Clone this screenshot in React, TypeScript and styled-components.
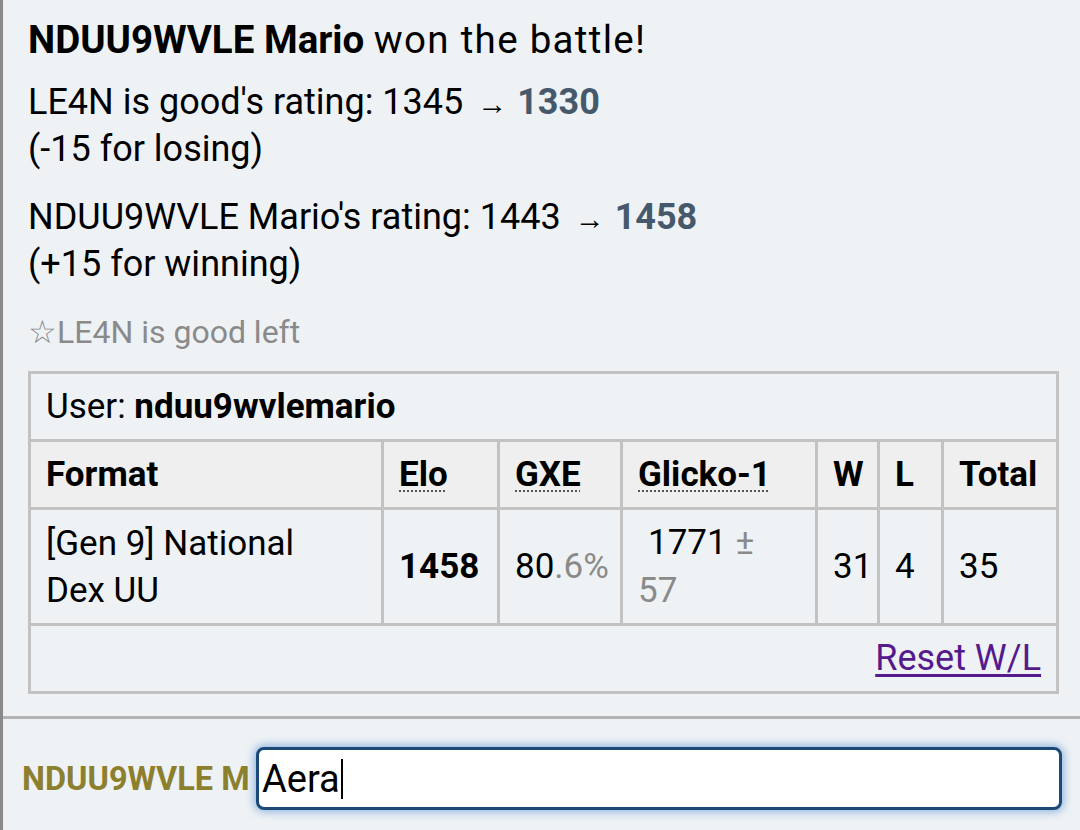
import React from "react";
import styled, { createGlobalStyle } from "styled-components";

const Global = createGlobalStyle`
  html, body {
    margin: 0;
    padding: 0;
    background: #eef2f5;
  }
  body {
    font-family: Roboto, "Liberation Sans", sans-serif;
    color: #000;
  }
`;

const Page = styled.div`
  width: 1080px;
  height: 830px;
  box-sizing: border-box;
  border-left: 3px solid #8a8a8a;
  background: #eef2f5;
  overflow: hidden;
`;

const Log = styled.section`
  padding: 16px 24px 22px 25px;
  border-bottom: 3px solid #b4b4b4;
  font-size: 36px;
  line-height: 47px;
`;

const Line = styled.p<{ gap?: number }>`
  margin: 0 0 ${(p) => p.gap ?? 13}px;
`;

const Headline = styled.p`
  margin: 0 0 16px;
  font-size: 38.5px;
`;

const Plain = styled.span`
  letter-spacing: 1.3px;
`;

const NewRating = styled.strong`
  color: #46596c;
`;

const Arrow = styled.span`
  font-size: 30px;
  line-height: 1;
  padding: 0 10px 0 14px;
`;

const Muted = styled.span`
  color: #8a8a8a;
`;

const Leave = styled.p`
  margin: 0;
  font-size: 32px;
  color: #8a8a8a;
`;

const Card = styled.table`
  margin-top: 15px;
  border-collapse: collapse;
  table-layout: fixed;
  border: 3px solid #c2c2c2;
  width: 1028px;
  font-size: 35px;
  line-height: 47px;
`;

const Cell = styled.td<{ align?: string; nowrap?: boolean }>`
  border: 3px solid #c2c2c2;
  padding: 9px 15px;
  text-align: ${(p) => p.align || "left"};
  white-space: ${(p) => (p.nowrap ? "nowrap" : "normal")};
  vertical-align: middle;
`;

const Head = styled.th`
  border: 3px solid #c2c2c2;
  padding: 9px 15px;
  text-align: left;
  background: #efefef;
  white-space: nowrap;
  font-weight: 700;
`;

const Abbr = styled.abbr`
  text-decoration: underline dotted #555;
  text-decoration-thickness: 2px;
  text-underline-offset: 4px;
  cursor: help;
`;

const Glicko = styled.div`
  line-height: 48px;
  padding-left: 10px;
`;

const ResetLink = styled.a`
  color: #551a8b;
  font-size: 36px;
  text-decoration: underline;
  text-underline-offset: 4px;
`;

const Composer = styled.div`
  display: flex;
  align-items: center;
  gap: 7px;
  padding: 28px 18px 0 19px;
`;

const Name = styled.div`
  width: 227px;
  overflow: hidden;
  white-space: nowrap;
  font-weight: 700;
  font-size: 32.5px;
  color: #8c7f2d;
`;

const Box = styled.div`
  flex: 1;
  height: 57px;
  border: 3px solid #1c4a78;
  border-radius: 8px;
  background: #fff;
  box-shadow: 0 0 9px 2px rgba(70, 130, 200, 0.55);
  display: flex;
  align-items: center;
  padding: 0 3px;
  font-size: 38px;
  color: #000;
`;

const Caret = styled.span`
  display: inline-block;
  width: 2px;
  height: 40px;
  background: #000;
  margin-left: 1px;
`;

const widths = [353, 116, 123, 195, 62, 64, 115];

export default function App() {
  return (
    <Page>
      <Global />
      <Log>
        <Headline>
          <strong>NDUU9WVLE Mario</strong> <Plain>won the battle!</Plain>
        </Headline>
        <Line gap={21}>
          LE4N is good's rating: 1345<Arrow>→</Arrow>
          <NewRating>1330</NewRating>
          <br />
          (-15 for losing)
        </Line>
        <Line gap={21}>
          NDUU9WVLE Mario's rating: 1443<Arrow>→</Arrow>
          <NewRating>1458</NewRating>
          <br />
          (+15 for winning)
        </Line>
        <Leave>☆LE4N is good left</Leave>
        <Card>
          <colgroup>
            {widths.map((w, i) => (
              <col key={i} style={{ width: w }} />
            ))}
          </colgroup>
          <tbody>
            <tr>
              <Cell colSpan={7}>
                User: <strong>nduu9wvlemario</strong>
              </Cell>
            </tr>
            <tr>
              <Head>Format</Head>
              <Head>
                <Abbr title="Elo rating">Elo</Abbr>
              </Head>
              <Head>
                <Abbr title="user's percentage chance of winning">GXE</Abbr>
              </Head>
              <Head>
                <Abbr title="Glicko-1 rating">Glicko-1</Abbr>
              </Head>
              <Head>W</Head>
              <Head>L</Head>
              <Head>Total</Head>
            </tr>
            <tr>
              <Cell>
                [Gen 9] National
                <br />
                Dex UU
              </Cell>
              <Cell nowrap>
                <strong>1458</strong>
              </Cell>
              <Cell nowrap>
                80<Muted>.6%</Muted>
              </Cell>
              <Cell>
                <Glicko>
                  1771 <Muted>±</Muted>
                </Glicko>
                <Muted>57</Muted>
              </Cell>
              <Cell>31</Cell>
              <Cell>4</Cell>
              <Cell>35</Cell>
            </tr>
            <tr>
              <Cell colSpan={7} align="right">
                <ResetLink href="#">Reset W/L</ResetLink>
              </Cell>
            </tr>
          </tbody>
        </Card>
      </Log>
      <Composer>
        <Name>NDUU9WVLE Mario</Name>
        <Box>
          Aera
          <Caret />
        </Box>
      </Composer>
    </Page>
  );
}
